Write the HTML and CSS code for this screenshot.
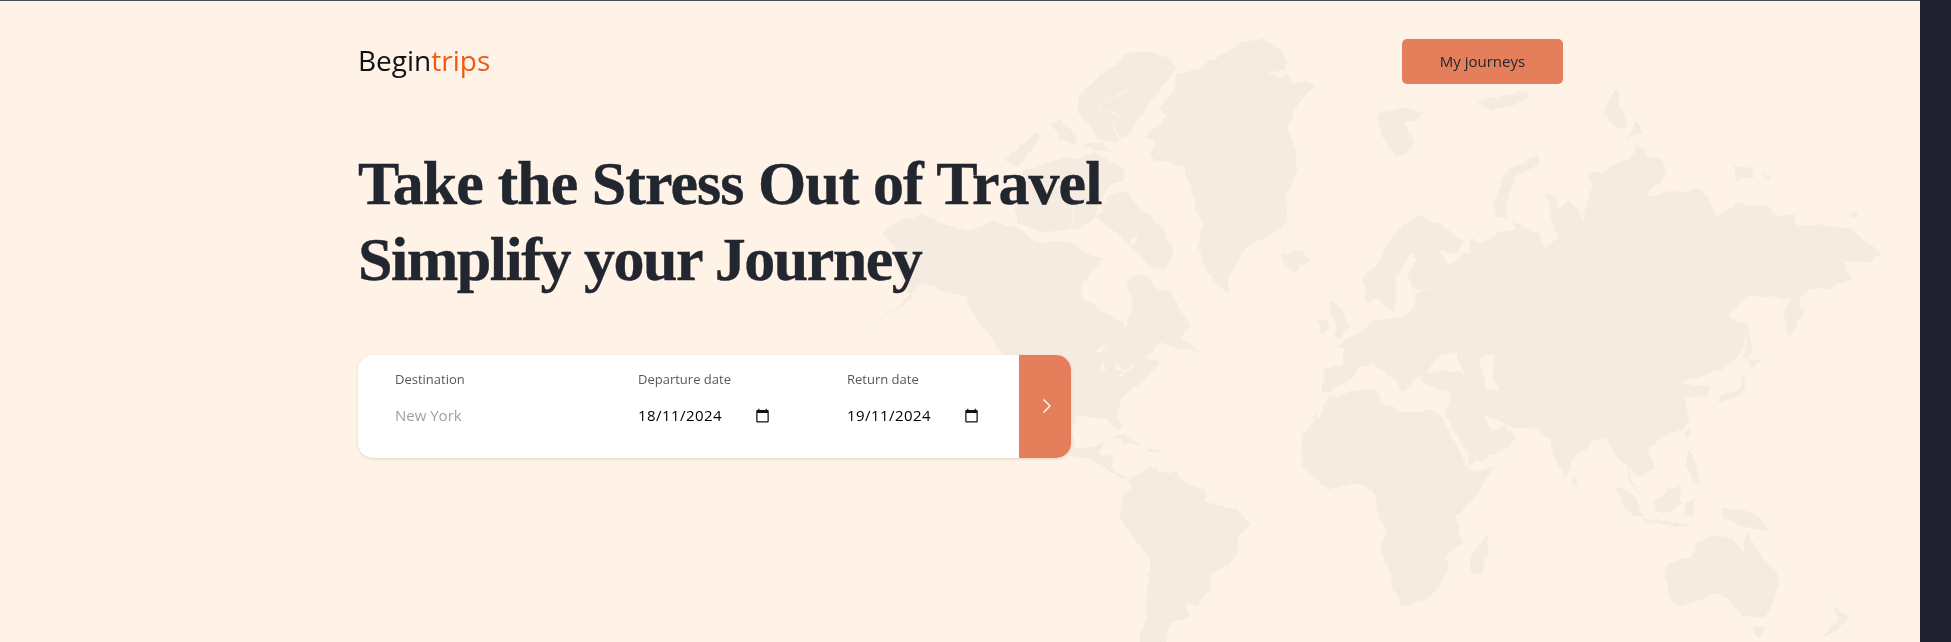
FILE: index.html
```html
<!DOCTYPE html>
<html lang="en">
<head>
    <meta charset="UTF-8">
    <title>Begintrips</title>
    <link rel="stylesheet" href="styles.css">
</head>
<body>
<div class="page">
    <!-- world map behind the content -->
    <svg class="map" viewBox="0 0 1920 642" aria-hidden="true">
        <defs>
            <!-- roughens the straight edges into coastlines -->
            <filter id="coast" filterUnits="userSpaceOnUse" x="0" y="0" width="1920" height="642" color-interpolation-filters="sRGB">
                <feTurbulence type="fractalNoise" baseFrequency=".07" numOctaves="3" seed="4"/>
                <feDisplacementMap in="SourceGraphic" scale="7" xChannelSelector="R" yChannelSelector="G"/>
            </filter>
        </defs>
        <g filter="url(#coast)">
        <g transform="translate(850 20) scale(.3509 .3333)">
            <polygon points="1110,65 1180,58 1220,85 1248,125 1235,145 1185,160 1250,165 1262,190 1300,178 1328,195 1300,225 1262,270 1250,330 1270,400 1278,465 1240,530 1248,600 1220,630 1160,660 1110,710 1085,770 1075,815 1050,800 1020,760 990,680 1005,620 985,560 965,480 950,440 910,425 870,430 855,395 870,370 838,350 880,315 900,285 885,260 920,215 935,165 990,145 1050,110"/>
            <polygon points="690,180 760,130 780,100 860,95 915,115 930,150 900,190 860,240 830,290 800,340 760,370 700,350 680,310 650,280 650,230 670,205"/>
            <polygon points="740,520 790,515 830,570 880,610 925,690 900,750 860,740 800,680 740,620 705,590"/>
            <polygon points="470,560 500,450 600,420 700,400 780,445 780,480 730,500 700,590 660,620 560,640 480,610"/>
            <polygon points="440,420 530,335 545,350 500,410 480,450"/>
            <polygon points="575,310 600,305 650,350 640,375 600,360"/>
            <polygon points="650,375 720,370 740,400 700,395"/>
            <polygon points="1228,700 1290,690 1310,720 1270,750 1240,735"/>
            <g class="channel">
                <polyline points="500,540 620,480 720,500"/>
                <polyline points="640,560 620,640"/>
                <polyline points="800,205 730,240 710,260 770,290"/>
                <polyline points="740,300 780,370"/>
            </g>
        </g>
        <g transform="translate(860 200) scale(.3333)">
            <polygon points="65,100 130,60 180,45 250,70 320,95 390,65 470,80 550,130 620,120 680,160 730,175 665,250 670,300 740,340 790,365 795,400 810,340 815,300 800,250 810,230 860,225 890,265 930,275 990,375 960,410 1015,455 960,450 900,430 860,470 910,490 870,520 830,560 790,590 770,640 790,680 770,690 740,650 650,645 635,680 633,770 430,460 400,420 350,360 320,290 270,280 215,255 190,255 40,375 165,290 130,270 100,140"/>
            <g class="water">
                <polygon points="695,450 745,440 720,460"/>
                <polygon points="730,475 740,510 725,510"/>
                <polygon points="765,480 790,510 770,505"/>
                <polygon points="775,520 815,495 820,500 785,525"/>
                <polygon points="815,120 832,115 830,135 815,135"/>
            </g>
        </g>
        <g transform="translate(1300 80) scale(.3827 .3333)">
            <polygon points="165,600 215,530 240,460 315,405 390,450 430,490 410,520 365,505 385,560 420,530 445,515 445,470 470,490 520,460 565,450 555,420 630,465 640,510 670,470 655,400 640,340 665,350 680,390 700,360 735,400 735,430 760,330 755,290 860,240 880,195 910,230 945,235 958,280 905,350 955,335 1000,335 1035,330 1070,350 1085,410 1150,370 1220,380 1240,405 1290,405 1305,440 1360,435 1440,445 1480,490 1520,520 1490,550 1420,545 1440,590 1375,630 1335,625 1290,660 1240,650 1170,645 1120,710 1165,735 1160,800 90,800 140,770 185,730 215,720 275,710 300,680 300,640 340,630 290,625 282,580 310,535 285,525 255,590 248,640 240,695 205,660 175,665"/>
            <polygon points="205,100 260,90 300,190 250,235 210,160"/>
            <polygon points="258,90 325,95 300,125 270,120"/>
            <polygon points="460,60 600,35 600,55 500,95"/>
            <polygon points="510,410 505,370 540,270 620,225 630,245 565,290 535,370 545,410"/>
            <polygon points="800,60 835,30 840,80 855,140 830,145 795,100"/>
            <polygon points="855,180 875,125 895,155"/>
            <polygon points="1135,255 1185,265 1185,295 1140,300"/>
            <polygon points="1200,280 1230,290 1215,298"/>
            <polygon points="1440,395 1462,395 1455,408 1438,408"/>
            <polygon points="85,660 110,690 135,740 100,775 85,770 100,730 75,690"/>
            <polygon points="50,720 80,710 75,750 55,760"/>
            <polygon points="1165,720 1180,790 1170,840 1155,830 1165,780"/>
            <polygon points="1330,590 1325,630 1300,670 1320,690 1290,750 1275,770 1265,700 1280,660"/>
        </g>
        <g transform="translate(1050 340) scale(.5421 .3333)">
            <!-- central america -->
            <polygon points="0,300 40,270 50,325 80,320 100,305 90,345 115,350 120,400 145,420 130,420 100,380 60,350 0,345"/>
            <polygon points="115,292 135,288 170,320 150,315"/>
            <polygon points="175,320 210,330 185,332"/>
            <!-- south america -->
            <polygon points="145,420 180,385 230,400 255,435 285,450 290,490 345,510 370,550 345,600 345,650 330,680 300,700 295,750 270,795 250,790 255,830 225,845 215,885 212,910 165,910 180,800 185,650 160,610 130,530 135,470 150,440"/>
            <!-- africa -->
            <polygon points="500,195 465,300 465,380 510,445 570,430 600,460 600,500 620,560 610,630 625,680 630,740 650,795 690,785 715,740 735,690 730,650 760,610 750,530 790,465 815,385 780,395 770,375 745,300 720,225 700,210 650,215 610,185 600,150 550,155 530,170 515,165 500,230 480,240"/>
            <polygon points="775,640 805,590 810,620 795,705 775,700"/>
            <!-- europe and asia, lower half -->
            <polygon points="505,80 540,80 540,50 550,0 1280,0 1270,50 1240,85 1200,110 1160,130 1220,140 1210,170 1170,170 1180,225 1170,265 1125,300 1100,325 1115,380 1090,410 1065,380 1090,470 1070,420 1065,375 1045,345 1025,295 1000,305 965,360 950,415 930,350 920,305 895,265 860,265 840,250 800,225 815,275 840,255 860,295 820,345 775,375 770,340 730,230 735,160 720,155 700,140 680,110 650,150 630,115 595,70 570,85 545,130 515,155 503,150"/>
            <g class="water">
                <polygon points="695,100 720,45 750,40 765,100 730,90"/>
                <polygon points="795,50 820,40 815,110 830,155 805,150"/>
            </g>
            <!-- islands -->
            <polygon points="1280,100 1285,140 1270,170 1230,190 1225,210 1240,170 1270,150"/>
            <polygon points="1285,60 1315,60 1290,90"/>
            <polygon points="1040,440 1080,470 1095,530 1075,525 1050,480"/>
            <polygon points="1115,480 1160,430 1165,490 1145,515 1115,510"/>
            <polygon points="1095,540 1140,545 1190,560 1140,558 1100,550"/>
            <polygon points="1170,490 1190,475 1185,530 1170,525"/>
            <polygon points="1175,330 1185,350 1200,430 1190,430 1175,380"/>
            <polygon points="1240,500 1300,520 1330,575 1280,560 1240,530"/>
            <polygon points="1175,270 1182,280 1172,295"/>
            <polygon points="965,405 972,430 963,435"/>
            <!-- australia and new zealand -->
            <polygon points="1140,675 1180,650 1190,610 1225,585 1255,590 1280,635 1285,580 1310,640 1340,700 1345,735 1325,825 1300,835 1275,825 1250,770 1220,765 1190,785 1155,800 1145,780 1135,710"/>
            <polygon points="1298,860 1318,860 1310,892 1300,885"/>
            <polygon points="1445,795 1472,830 1450,870 1420,900 1440,860 1455,830"/>
        </g>
        </g>
    </svg>

    <div class="container">
        <header class="nav">
            <a class="logo" href="#">Begin<span class="logo-accent">trips</span></a>
            <button class="btn-journeys" type="button">My journeys</button>
        </header>

        <h1 class="headline">Take the Stress Out of Travel<br><span class="headline-second">Simplify your Journey</span></h1>

        <form class="search">
            <div class="field field-destination">
                <label class="field-label" for="destination">Destination</label>
                <input class="field-input" id="destination" type="text" placeholder="New York">
            </div>
            <div class="field field-departure">
                <label class="field-label" for="departure">Departure date</label>
                <div class="date-row">
                    <input class="field-input date-input" id="departure" type="text" value="18/11/2024">
                    <svg class="calendar" viewBox="0 0 24 24"><path d="M20 3h-1V1h-2v2H7V1H5v2H4c-1.1 0-2 .9-2 2v16c0 1.1.9 2 2 2h16c1.1 0 2-.9 2-2V5c0-1.1-.9-2-2-2zm0 18H4V8h16v13z"/></svg>
                </div>
            </div>
            <div class="field field-return">
                <label class="field-label" for="return">Return date</label>
                <div class="date-row">
                    <input class="field-input date-input" id="return" type="text" value="19/11/2024">
                    <svg class="calendar" viewBox="0 0 24 24"><path d="M20 3h-1V1h-2v2H7V1H5v2H4c-1.1 0-2 .9-2 2v16c0 1.1.9 2 2 2h16c1.1 0 2-.9 2-2V5c0-1.1-.9-2-2-2zm0 18H4V8h16v13z"/></svg>
                </div>
            </div>
            <button class="search-go" type="submit" aria-label="Search">
                <svg class="chevron" viewBox="0 0 10 16"><path d="M1.500 1.500 8 8l-6.500 6.500"/></svg>
            </button>
        </form>
    </div>
</div>
</body>
</html>
```

FILE: styles.css
```css
html, body {
    margin: 0;
    height: 642px;
    overflow: hidden;
    background: #212130;
}
body {
    font-family: "Open Sans", "Noto Sans", sans-serif;
    color: #22262e;
}
.page {
    position: relative;
    width: 1920px;
    height: 642px;
    box-sizing: border-box;
    overflow: hidden;
    background: #fff3e8;
    border-top: 1px solid #4b4d55;
}
.map {
    position: absolute;
    top: -1px;
    left: 0;
    width: 1920px;
    height: 642px;
    fill: #f6ebe0;
}
.map .water {
    fill: #fff3e8;
}
.map .channel {
    fill: none;
    stroke: #fff3e8;
    stroke-width: 4;
}
.container {
    position: relative;
    width: 1205px;
    margin-left: 358px;
}

/* header */
.nav {
    display: flex;
    justify-content: space-between;
    align-items: center;
    padding-top: 38px;
}
.logo {
    font-size: 28px;
    line-height: 43px;
    margin-bottom: 2px;
    color: #111;
    text-decoration: none;
}
.logo-accent {
    color: #ee5a14;
}
.btn-journeys {
    width: 161px;
    height: 45px;
    padding: 0 0 2px;
    border: 0;
    border-radius: 5px;
    background: #e57e5b;
    color: #22262e;
    font-family: inherit;
    font-size: 15px;
}

/* headline */
.headline {
    margin: 61px 0 0;
    font-family: "Liberation Serif", serif;
    font-size: 62px;
    font-weight: 700;
    line-height: 76px;
    letter-spacing: -.95px;
    color: #22262e;
    -webkit-text-stroke: .4px #22262e;
}
.headline-second {
    letter-spacing: -1.5px;
}

/* search form */
.search {
    display: flex;
    width: 713px;
    height: 103px;
    margin-top: 58px;
    border-radius: 15px;
    overflow: hidden;
    background: #fff;
    box-shadow: 0 1px 3px rgba(120, 80, 50, .2);
}
.field {
    display: flex;
    flex-direction: column;
    gap: 15px;
    box-sizing: border-box;
    padding-top: 15px;
}
.field-destination {
    width: 280px;
    padding-left: 37px;
}
.field-departure {
    width: 209px;
}
.field-return {
    width: 172px;
}
.field-label {
    font-size: 13px;
    line-height: 18px;
    color: #565a60;
}
.field-input {
    width: 200px;
    padding: 0;
    border: 0;
    outline: 0;
    background: none;
    font-family: inherit;
    font-size: 15px;
    line-height: 24px;
}
.field-input::placeholder {
    color: #a0a0a0;
}
.date-row {
    display: flex;
    align-items: center;
    gap: 15px;
}
.date-input {
    width: 102px;
    color: #000;
    letter-spacing: .45px;
}
.calendar {
    width: 15px;
    height: 15px;
    fill: #111;
}
.search-go {
    display: flex;
    align-items: center;
    justify-content: center;
    width: 52px;
    padding: 0 0 2px 3px;
    border: 0;
    background: #e57e5b;
}
.chevron {
    width: 10px;
    height: 16px;
    fill: none;
    stroke: #fff;
    stroke-width: 1.4;
}
```
